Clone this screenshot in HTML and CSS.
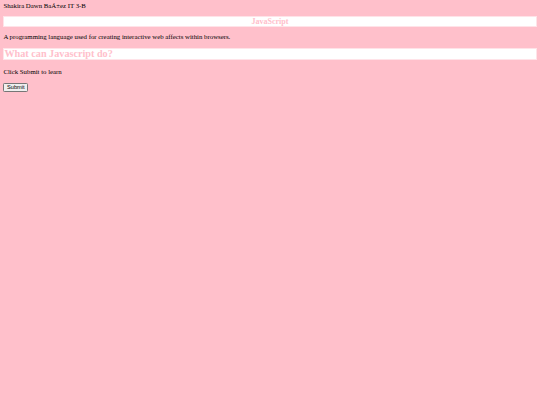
FILE: index.html
```html
<!DOCTYPE html>
<html>
<head>
<meta charset="utf-8">
<title>JavaScript</title>
<link rel="stylesheet" href="styles.css">
</head>
<body>
<div class="name">Shakira Dawn BaÃ±ez IT 3-B</div>
<h3 class="title">JavaScript</h3>
<p class="desc">A programming language used for creating interactive web affects within browsers.</p>
<h2 class="question">What can Javascript do?</h2>
<p class="learn">Click Submit to learn</p>
<form class="form"><button type="button" class="submit">Submit</button></form>
</body>
</html>
```
FILE: styles.css
```css
html, body {
  background: #ffc0cb;
}
body {
  margin: 3.4px;
  font-family: "Liberation Serif", "Times New Roman", serif;
  font-size: 6.8px;
  color: #000;
}
.name {
  margin: 0;
  line-height: 6.4px;
}
.title {
  margin: 6px 0 0;
  background: #fff;
  border: 0.5px solid #ffe3e8;
  color: #ffc0cb;
  font-size: 8px;
  font-weight: bold;
  text-align: center;
  line-height: 9px;
}
.desc {
  margin: 5.8px 0 0;
}
.question {
  margin: 8px 0 0;
  background: #fff;
  border: 0.5px solid #ffe3e8;
  color: #ffc0cb;
  font-size: 10.2px;
  font-weight: bold;
  line-height: 10px;
}
.learn {
  margin: 8.5px 0 7.8px;
}
.form {
  margin: 0;
}
.submit {
  font-family: "Liberation Sans", Arial, sans-serif;
  font-size: 5.7px;
  padding: 0.5px 2.6px;
  border: 0.8px solid #767676;
  border-radius: 1.3px;
  background: #efefef;
  color: #000;
  line-height: normal;
}
```
